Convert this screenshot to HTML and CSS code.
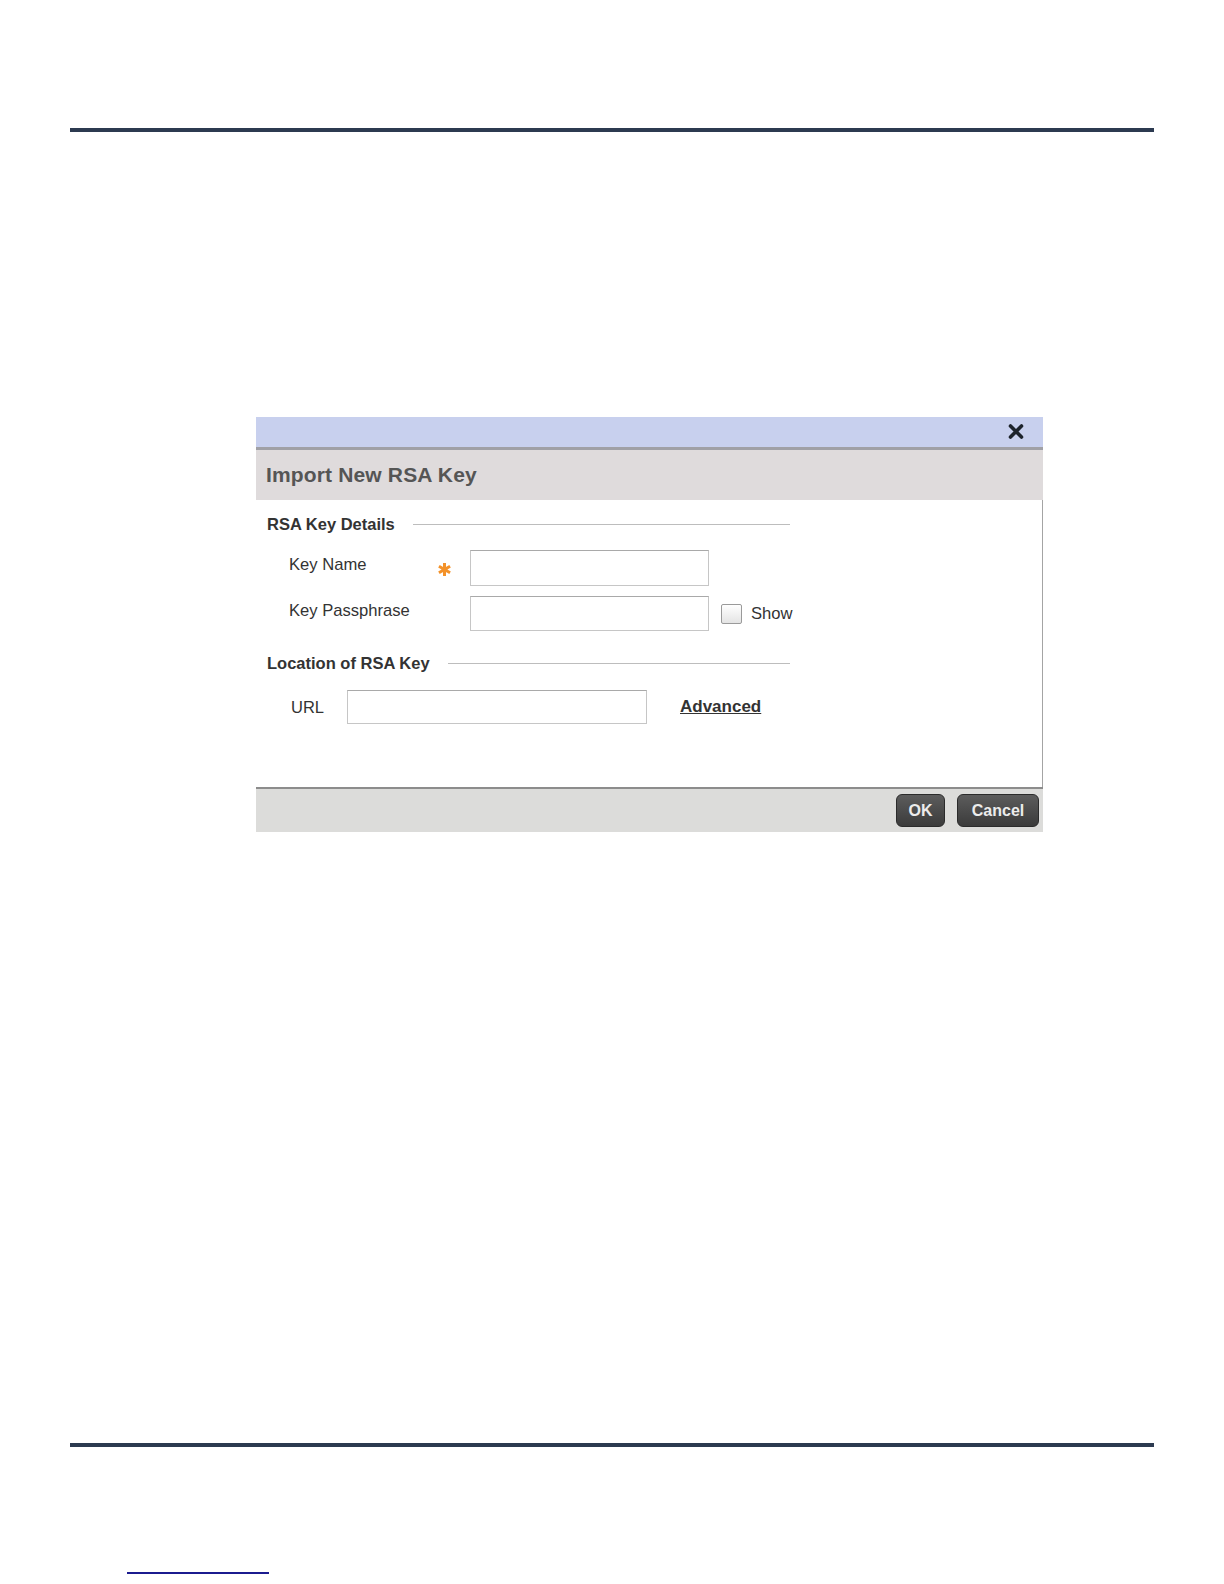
FILE: index.html
```html
<!DOCTYPE html>
<html lang="en">
<head>
  <meta charset="UTF-8" />
  <meta name="viewport" content="width=device-width, initial-scale=1.0" />
  <title>Import New RSA Key</title>
  <link rel="stylesheet" href="styles.css">
</head>
<body>
  <div class="page">
    <div class="rule"></div>

    <div class="dialog">
      <div class="dialog-bar">
        <button class="close" title="Close">
          <svg width="16" height="15" viewBox="0 0 16 15">
            <path d="M2.5 2 L13.5 13 M13.5 2 L2.5 13" stroke="#1d232c" stroke-width="3.6" stroke-linecap="round" />
          </svg>
        </button>
      </div>
      <div class="dialog-head">
        <h2>Import New RSA Key</h2>
      </div>

      <div class="dialog-body">
        <div class="group-title">RSA Key Details</div>

        <div class="field-row first">
          <label for="keyName">Key Name</label>
          <svg class="req" width="15" height="15" viewBox="0 0 14 14">
            <path d="M7 1 V13 M1.8 4 L12.2 10 M12.2 4 L1.8 10" stroke="#f3922a" stroke-width="2.8" />
          </svg>
          <input type="text" id="keyName" />
        </div>

        <div class="field-row second">
          <label for="keyPass">Key Passphrase</label>
          <span></span>
          <input type="password" id="keyPass" />
          <span class="show">
            <span class="check"></span>
            Show
          </span>
        </div>

        <div class="group-title group-two">Location of RSA Key</div>

        <div class="url-row">
          <label for="keyUrl">URL</label>
          <input type="text" id="keyUrl" />
          <a href="#" class="advanced">Advanced</a>
        </div>
      </div>

      <div class="dialog-foot">
        <button class="btn btn-ok">OK</button>
        <button class="btn btn-cancel">Cancel</button>
      </div>
    </div>

    <div class="rule rule-bottom"></div>
    <div class="page-link"></div>
  </div>
</body>
</html>
```

FILE: styles.css
```css
body {
  margin: 0;
  font-family: "Liberation Sans", Arial, sans-serif;
  background: #fff;
  color: #333;
}
.page {
  padding-top: 128px;
}
.rule {
  margin-left: 70px;
  width: 1084px;
  height: 4px;
  background: #2c3a50;
}
.rule-bottom {
  margin-top: 611px;
}
.page-link {
  margin: 125px 0 0 127px;
  width: 142px;
  border-bottom: 2px solid #1b1b8f;
}

/* dialog */
.dialog {
  margin: 285px 0 0 256px;
  width: 787px;
}
.dialog-bar {
  height: 28px;
  background: #c8d0ee;
  border-bottom: 3px solid #a0a0a6;
  display: flex;
  justify-content: flex-end;
  align-items: center;
  padding: 0 19px 2px 0;
}
.close {
  border: 0;
  background: none;
  padding: 0;
  width: 16px;
  height: 15px;
  display: flex;
}
.dialog-head {
  height: 50px;
  background: #dfdbdc;
  padding-left: 10px;
}
.dialog-head h2 {
  margin: 0;
  font-size: 21px;
  letter-spacing: 0.15px;
  line-height: 49px;
  color: #555;
}
.dialog-body {
  box-sizing: border-box;
  height: 287px;
  padding: 14px 0 0 11px;
  border-right: 1px solid #a4a4a4;
  background: #fff;
}
.group-title {
  width: 523px;
  display: flex;
  align-items: center;
  gap: 18px;
  font-size: 16.5px;
  font-weight: bold;
  line-height: 20px;
  color: #333;
}
.group-title::after {
  content: "";
  flex: 1;
  border-top: 1px solid #bdbdbd;
}
.group-two {
  margin-top: 22px;
}
.field-row {
  display: grid;
  grid-template-columns: 148px 33px 239px auto;
  align-items: center;
  margin-left: 22px;
  font-size: 16.6px;
}
.field-row.first {
  margin-top: 16px;
}
.field-row.second {
  margin-top: 10px;
}
.field-row label {
  align-self: start;
  padding-top: 5px;
  line-height: 19px;
}
.field-row input {
  height: 36px;
}
.field-row.second input {
  height: 35px;
}
.req {
  margin: 2px 0 0 0;
}
input {
  box-sizing: border-box;
  margin: 0;
  border: 1px solid #c6c6c6;
  border-top-color: #a9a9a9;
  background: #fff;
  font: inherit;
}
.show {
  display: flex;
  align-items: center;
  gap: 9px;
  margin-left: 12px;
}
.check {
  box-sizing: border-box;
  width: 21px;
  height: 20px;
  border: 1px solid #9a9a9a;
  border-radius: 2px;
  background: linear-gradient(#fff, #e4e4e4);
}
.url-row {
  display: grid;
  grid-template-columns: 56px 300px auto;
  align-items: center;
  margin: 17px 0 0 24px;
  font-size: 16.5px;
}
.url-row input {
  height: 34px;
}
.advanced {
  margin-left: 33px;
  font-size: 17px;
  font-weight: bold;
  color: #333;
  text-decoration: underline;
}
.dialog-foot {
  height: 45px;
  box-sizing: border-box;
  border-top: 2px solid #8c8c8c;
  background: #dcdcda;
  display: flex;
  justify-content: flex-end;
  align-items: flex-start;
  gap: 12px;
  padding: 5px 4px 0 0;
}
.btn {
  height: 33px;
  border: 1px solid #2b2b2b;
  border-radius: 6px;
  background: linear-gradient(#5c5c5c, #3b3b3b);
  color: #ececec;
  font: bold 16px "Liberation Sans", Arial, sans-serif;
  padding: 0;
}
.btn-ok {
  width: 49px;
}
.btn-cancel {
  width: 82px;
}
```
